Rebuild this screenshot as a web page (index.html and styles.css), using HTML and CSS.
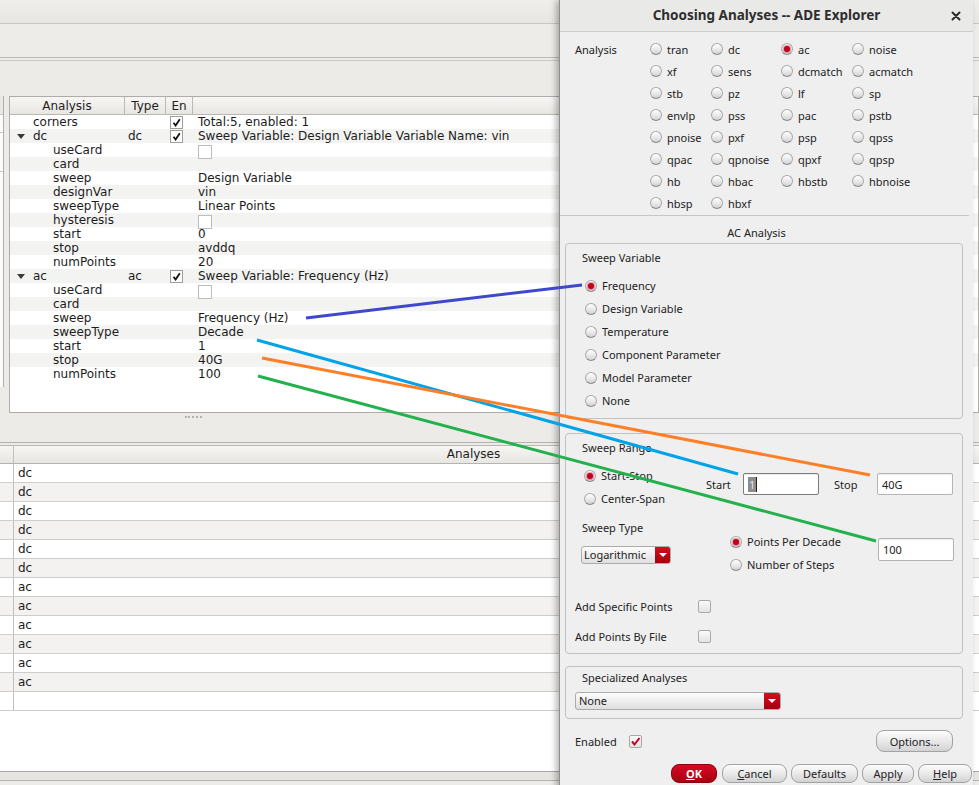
FILE: index.html
```html
<!DOCTYPE html>
<html>
<head>
<meta charset="utf-8">
<title>Choosing Analyses</title>
<link rel="stylesheet" href="styles.css">
</head>
<body>
<div class="desktop">
  <div class="app">
    <div class="tb1"></div>
    <div class="tb2"></div>
    <div class="tb3"></div>
    <div class="work">
      <div class="side">
        <div class="side-cell h1"></div>
        <div class="side-cell h2"></div>
        <div class="side-cell h3"></div>
      </div>
      <div class="tree">
        <div class="tree-head">
          <div class="hc hc1">Analysis</div>
          <div class="hc hc2">Type</div>
          <div class="hc hc3">En</div>
          <div class="hc4"></div>
        </div>
        <div class="trow"><div class="c1 top">corners</div><div class="c2"></div><div class="c3"><span class="tchk"><svg width="9" height="9" viewBox="0 0 9 9"><path d="M1.5 4.8 L3.6 7.5 L7.8 1.2" fill="none" stroke="#111" stroke-width="1.8"/></svg></span></div><div class="c4">Total:5, enabled: 1</div></div>
        <div class="trow alt"><div class="c1 top"><span class="tri"></span>dc</div><div class="c2">dc</div><div class="c3"><span class="tchk"><svg width="9" height="9" viewBox="0 0 9 9"><path d="M1.5 4.8 L3.6 7.5 L7.8 1.2" fill="none" stroke="#111" stroke-width="1.8"/></svg></span></div><div class="c4">Sweep Variable: Design Variable Variable Name: vin</div></div>
        <div class="trow"><div class="c1 sub">useCard</div><div class="c2"></div><div class="c3"></div><div class="c4"><span class="tbox"></span></div></div>
        <div class="trow alt"><div class="c1 sub">card</div><div class="c2"></div><div class="c3"></div><div class="c4"></div></div>
        <div class="trow"><div class="c1 sub">sweep</div><div class="c2"></div><div class="c3"></div><div class="c4">Design Variable</div></div>
        <div class="trow alt"><div class="c1 sub">designVar</div><div class="c2"></div><div class="c3"></div><div class="c4">vin</div></div>
        <div class="trow"><div class="c1 sub">sweepType</div><div class="c2"></div><div class="c3"></div><div class="c4">Linear Points</div></div>
        <div class="trow alt"><div class="c1 sub">hysteresis</div><div class="c2"></div><div class="c3"></div><div class="c4"><span class="tbox"></span></div></div>
        <div class="trow"><div class="c1 sub">start</div><div class="c2"></div><div class="c3"></div><div class="c4">0</div></div>
        <div class="trow alt"><div class="c1 sub">stop</div><div class="c2"></div><div class="c3"></div><div class="c4">avddq</div></div>
        <div class="trow"><div class="c1 sub">numPoints</div><div class="c2"></div><div class="c3"></div><div class="c4">20</div></div>
        <div class="trow alt"><div class="c1 top"><span class="tri"></span>ac</div><div class="c2">ac</div><div class="c3"><span class="tchk"><svg width="9" height="9" viewBox="0 0 9 9"><path d="M1.5 4.8 L3.6 7.5 L7.8 1.2" fill="none" stroke="#111" stroke-width="1.8"/></svg></span></div><div class="c4">Sweep Variable: Frequency (Hz)</div></div>
        <div class="trow"><div class="c1 sub">useCard</div><div class="c2"></div><div class="c3"></div><div class="c4"><span class="tbox"></span></div></div>
        <div class="trow alt"><div class="c1 sub">card</div><div class="c2"></div><div class="c3"></div><div class="c4"></div></div>
        <div class="trow"><div class="c1 sub">sweep</div><div class="c2"></div><div class="c3"></div><div class="c4">Frequency (Hz)</div></div>
        <div class="trow alt"><div class="c1 sub">sweepType</div><div class="c2"></div><div class="c3"></div><div class="c4">Decade</div></div>
        <div class="trow"><div class="c1 sub">start</div><div class="c2"></div><div class="c3"></div><div class="c4">1</div></div>
        <div class="trow alt"><div class="c1 sub">stop</div><div class="c2"></div><div class="c3"></div><div class="c4">40G</div></div>
        <div class="trow"><div class="c1 sub">numPoints</div><div class="c2"></div><div class="c3"></div><div class="c4">100</div></div>
      </div>
    </div>
    <div class="splitter"><span class="grip"></span></div>
    <div class="results">
      <div class="rhead"><div class="r0"></div><div class="r1 rh">Analyses</div></div>
      <div class="rrow"><div class="r0"></div><div class="r1">dc</div></div>
      <div class="rrow alt"><div class="r0"></div><div class="r1">dc</div></div>
      <div class="rrow"><div class="r0"></div><div class="r1">dc</div></div>
      <div class="rrow alt"><div class="r0"></div><div class="r1">dc</div></div>
      <div class="rrow"><div class="r0"></div><div class="r1">dc</div></div>
      <div class="rrow alt"><div class="r0"></div><div class="r1">dc</div></div>
      <div class="rrow"><div class="r0"></div><div class="r1">ac</div></div>
      <div class="rrow alt"><div class="r0"></div><div class="r1">ac</div></div>
      <div class="rrow"><div class="r0"></div><div class="r1">ac</div></div>
      <div class="rrow alt"><div class="r0"></div><div class="r1">ac</div></div>
      <div class="rrow"><div class="r0"></div><div class="r1">ac</div></div>
      <div class="rrow alt"><div class="r0"></div><div class="r1">ac</div></div>
      <div class="rrow"><div class="r0"></div><div class="r1"></div></div>
    </div>
    <div class="status"></div>
  </div>

  <div class="dialog">
    <div class="titlebar">
      <div></div>
      <div class="title">Choosing Analyses -- ADE Explorer</div>
      <div class="close"><svg width="10" height="10" viewBox="0 0 10 10"><path d="M1.5 1.5 L8.5 8.5 M8.5 1.5 L1.5 8.5" stroke="#2a2a2a" stroke-width="2" stroke-linecap="round"/></svg></div>
    </div>
    <div class="dbody">
      <div class="agrid">
        <div class="alabel">Analysis</div>
        <div class="opt"><span class="rb"></span>tran</div>
        <div class="opt"><span class="rb"></span>dc</div>
        <div class="opt"><span class="rb on"></span>ac</div>
        <div class="opt"><span class="rb"></span>noise</div>
        <div class="opt"><span class="rb"></span>xf</div>
        <div class="opt"><span class="rb"></span>sens</div>
        <div class="opt"><span class="rb"></span>dcmatch</div>
        <div class="opt"><span class="rb"></span>acmatch</div>
        <div class="opt"><span class="rb"></span>stb</div>
        <div class="opt"><span class="rb"></span>pz</div>
        <div class="opt"><span class="rb"></span>lf</div>
        <div class="opt"><span class="rb"></span>sp</div>
        <div class="opt"><span class="rb"></span>envlp</div>
        <div class="opt"><span class="rb"></span>pss</div>
        <div class="opt"><span class="rb"></span>pac</div>
        <div class="opt"><span class="rb"></span>pstb</div>
        <div class="opt"><span class="rb"></span>pnoise</div>
        <div class="opt"><span class="rb"></span>pxf</div>
        <div class="opt"><span class="rb"></span>psp</div>
        <div class="opt"><span class="rb"></span>qpss</div>
        <div class="opt"><span class="rb"></span>qpac</div>
        <div class="opt"><span class="rb"></span>qpnoise</div>
        <div class="opt"><span class="rb"></span>qpxf</div>
        <div class="opt"><span class="rb"></span>qpsp</div>
        <div class="opt"><span class="rb"></span>hb</div>
        <div class="opt"><span class="rb"></span>hbac</div>
        <div class="opt"><span class="rb"></span>hbstb</div>
        <div class="opt"><span class="rb"></span>hbnoise</div>
        <div class="opt"><span class="rb"></span>hbsp</div>
        <div class="opt"><span class="rb"></span>hbxf</div>
      </div>
      <div class="sep"></div>
      <div class="section-title">AC Analysis</div>

      <div class="group g-var">
        <div class="gtitle">Sweep Variable</div>
        <div class="vlist">
          <div class="vopt"><span class="rb on"></span>Frequency</div>
          <div class="vopt"><span class="rb"></span>Design Variable</div>
          <div class="vopt"><span class="rb"></span>Temperature</div>
          <div class="vopt"><span class="rb"></span>Component Parameter</div>
          <div class="vopt"><span class="rb"></span>Model Parameter</div>
          <div class="vopt"><span class="rb"></span>None</div>
        </div>
      </div>

      <div class="group g-range">
        <div class="gtitle">Sweep Range</div>
        <div class="range-row">
          <div class="range-radios">
            <div class="vopt"><span class="rb on"></span>Start-Stop</div>
            <div class="vopt"><span class="rb"></span>Center-Span</div>
          </div>
          <div class="fields">
            <span class="flabel fl-start">Start</span>
            <span class="tin focus"><span class="sel">1</span><span class="caret"></span></span>
            <span class="flabel fl-stop">Stop</span>
            <span class="tin">40G</span>
          </div>
        </div>
        <div class="type-row">
          <div class="type-left">
            <div class="tlabel">Sweep Type</div>
            <div class="combo c-log"><span class="ctext">Logarithmic</span><span class="cbtn"><span class="ctri"></span></span></div>
          </div>
          <div class="type-mid">
            <div class="vopt"><span class="rb on"></span>Points Per Decade</div>
            <div class="vopt"><span class="rb"></span>Number of Steps</div>
          </div>
          <div class="type-right">
            <span class="tin">100</span>
          </div>
        </div>
        <div class="chk-row first"><span class="clabel">Add Specific Points</span><span class="cbox"></span></div>
        <div class="chk-row"><span class="clabel">Add Points By File</span><span class="cbox"></span></div>
      </div>

      <div class="group g-spec">
        <div class="gtitle">Specialized Analyses</div>
        <div class="combo c-none"><span class="ctext">None</span><span class="cbtn"><span class="ctri"></span></span></div>
      </div>

      <div class="en-row">
        <span class="en-label">Enabled</span>
        <span class="cbox checked"><svg width="11" height="11" viewBox="0 0 11 11"><path d="M2 5.5 L4.5 8.5 L9.5 2" fill="none" stroke="#c4001c" stroke-width="2"/></svg></span>
        <span class="spacer"></span>
        <span class="btn opt-btn">Options...</span>
      </div>

      <div class="btn-row">
        <span class="btn ok"><u>O</u>K</span>
        <span class="btn b-cancel"><u>C</u>ancel</span>
        <span class="btn b-def">Defaults</span>
        <span class="btn b-apply">Apply</span>
        <span class="btn b-help"><u>H</u>elp</span>
      </div>
    </div>
  </div>

  <svg class="annot" width="979" height="785" viewBox="0 0 979 785">
    <line x1="306" y1="318" x2="582" y2="285" stroke="#3f48cc" stroke-width="3"/>
    <line x1="257" y1="340" x2="738" y2="474" stroke="#00a2e8" stroke-width="3"/>
    <line x1="262" y1="358" x2="870" y2="475" stroke="#ff7f27" stroke-width="3"/>
    <line x1="258" y1="376" x2="876" y2="541" stroke="#22b14c" stroke-width="3"/>
  </svg>
</div>
</body>
</html>
```
FILE: styles.css
```css
* { box-sizing: border-box; }
html, body { margin: 0; padding: 0; }
body {
  width: 979px;
  height: 785px;
  overflow: hidden;
  background: #edebe8;
  font-family: "DejaVu Sans", sans-serif;
  font-size: 12px;
  color: #1c1c1c;
}
.desktop { position: relative; width: 979px; height: 785px; overflow: hidden; }

/* ---------- background application ---------- */
.app { display: flex; flex-direction: column; width: 979px; height: 785px; background: #edebe8; }
.tb1 { height: 24px; background: linear-gradient(#efeeeb, #e8e6e2); border-bottom: 1px solid #c9c7c3; }
.tb2 { height: 34px; background: #eeece9; border-bottom: 1px solid #bdbbb7; }
.tb3 { height: 36px; margin-top: 2px; border-top: 1px solid #cac8c4; background: #edebe8; }

.work { display: flex; height: 317px; }
.side { width: 4px; height: 291px; background: #fbfbfa; border-right: 1px solid #b2b0ac; display: flex; flex-direction: column; }
.side-cell { border-bottom: 1px solid #c9c7c3; }
.side-cell.h1 { height: 19px; background: #e9e7e3; }
.side-cell.h2 { height: 18px; }
.side-cell.h3 { height: 39px; }

.tree { margin-left: 5px; flex: 1; border: 1px solid #aeaca8; background: #fff; overflow: hidden; }
.tree-head { display: grid; grid-template-columns: 115px 41px 27px 1fr; height: 18px; border-bottom: 1px solid #b9b7b3; background: linear-gradient(#f7f6f4, #e8e6e2); }
.hc { border-right: 1px solid #bcbab6; text-align: center; line-height: 18px; color: #222; }
.trow { display: grid; grid-template-columns: 115px 41px 27px 1fr; height: 14px; line-height: 14px; white-space: nowrap; }
.trow.alt { background: #f3f3f2; }
.c1 { position: relative; }
.c1.top { padding-left: 23px; }
.c1.sub { padding-left: 43px; }
.c2 { padding-left: 3px; }
.c3 { padding-left: 4px; display: flex; align-items: center; }
.c4 { padding-left: 5px; display: flex; align-items: center; }
.tri { position: absolute; left: 7px; top: 5px; width: 0; height: 0; border-left: 4px solid transparent; border-right: 4px solid transparent; border-top: 5px solid #3a3a3a; }
.tchk { width: 13px; height: 13px; border: 1px solid #9e9e9e; background: #fff; display: flex; align-items: center; justify-content: center; }
.tbox { width: 14px; height: 14px; border: 1px solid #bdbdbd; background: #fff; margin-top: 2px; }

.splitter { height: 30px; border-bottom: 1px solid #b5b3af; display: flex; justify-content: flex-start; }
.grip { margin: 3px 0 0 185px; width: 17px; height: 2px; border-top: 2px dotted #b3b1ad; }

.results { margin-top: 2px; border-top: 1px solid #bab8b4; height: 326px; background: #fff; }
.rhead { display: flex; height: 18px; border-bottom: 1px solid #b5b3af; background: linear-gradient(#f6f5f3, #e8e6e2); }
.rrow { display: flex; height: 19px; border-bottom: 1px solid #cfcdca; line-height: 18px; }
.rrow.alt { background: #f3f2f0; }
.r0 { width: 14px; border-right: 1px solid #c2c0bc; }
.r1 { flex: 1; padding-left: 4px; }
.r1.rh { text-align: center; padding-right: 50px; line-height: 17px; }
.status { height: 10px; border-top: 1px solid #aaa8a4; border-bottom: 1px solid #b8b6b2; background: #e6e4e0; }

/* ---------- dialog ---------- */
.dialog {
  position: absolute;
  left: 559px;
  top: 0;
  width: 414px;
  height: 800px;
  background: #efefef;
  border-left: 1px solid #8e8e8e;
  box-shadow: -3px 0 6px rgba(0, 0, 0, 0.28);
  font-family: "Noto Sans", "Open Sans", sans-serif;
  font-size: 11px;
  color: #222;
}
.titlebar { display: grid; grid-template-columns: 1fr auto 1fr; align-items: center; height: 32px; border-bottom: 1px solid #cdcdcd; background: #e9e9e8; }
.title { font-size: 13.5px; font-weight: 700; color: #2e2e2e; margin-top: -1px; }
.close { justify-self: end; margin-right: 12px; display: flex; }
.dbody { display: flex; flex-direction: column; padding-top: 6px; }

.agrid { margin-left: 15px; display: grid; grid-template-columns: 75px 61px 70px 71px 80px; grid-auto-rows: 22px; }
.alabel { grid-row: 1 / span 8; line-height: 22px; padding-top: 1px; }
.opt { display: flex; align-items: center; gap: 5px; white-space: nowrap; }

.rb {
  position: relative;
  flex: none;
  width: 12px;
  height: 12px;
  border-radius: 50%;
  border: 1px solid #a9a9a9;
  border-bottom-color: #8a8a8a;
  background: linear-gradient(#ffffff, #e6e6e6 60%, #d2d2d2);
}
.rb.on::after {
  content: "";
  position: absolute;
  left: 2px;
  top: 2px;
  width: 6px;
  height: 6px;
  border-radius: 50%;
  background: #c1001e;
  box-shadow: 0 0 1px 1px rgba(220, 60, 90, 0.55);
}

.sep { height: 1px; background: #c6c6c6; width: 409px; margin-top: 1px; }
.section-title { margin-top: 9px; line-height: 16px; text-align: center; padding-right: 20px; }

.group { margin-left: 5px; width: 398px; border: 1px solid #c2c2c2; border-radius: 4px; display: flex; flex-direction: column; }
.gtitle { margin-left: 16px; line-height: 16px; }
.g-var { margin-top: 2px; padding: 6px 0 6px 0; }
.vlist { margin: 8px 0 0 19px; display: flex; flex-direction: column; }
.vopt { height: 23px; display: flex; align-items: center; gap: 5px; white-space: nowrap; }

.g-range { margin-top: 14px; padding: 6px 0 7px 0; }
.range-row { margin-top: 8px; display: flex; height: 46px; }
.range-radios { margin-left: 18px; width: 122px; display: flex; flex-direction: column; }
.fields { display: flex; align-items: center; height: 22px; margin-top: 9px; }
.flabel { display: inline-block; }
.fl-start { width: 37px; }
.fl-stop { width: 43px; margin-left: 15px; }
.tin {
  display: flex;
  align-items: center;
  width: 76px;
  height: 22px;
  padding-left: 4px;
  background: #fff;
  border: 1px solid #b4b4b4;
  border-radius: 2px;
  box-shadow: inset 0 1px 1px rgba(0, 0, 0, 0.08);
}
.tin.focus { border-color: #7c7c7c; }
.sel { background: #8c8c8c; color: #e9e9e9; padding: 0 1px; line-height: 15px; }
.caret { width: 1px; height: 15px; background: #222; }

.type-row { margin-top: 10px; display: grid; grid-template-columns: 148px 148px 76px; margin-left: 16px; height: 56px; }
.tlabel { line-height: 16px; }
.combo {
  display: flex;
  height: 18px;
  border: 1px solid #ababab;
  border-radius: 3px;
  background: linear-gradient(#fdfdfd, #dfdfdf);
  overflow: hidden;
}
.c-log { margin: 10px 0 0 -1px; width: 90px; }
.ctext { flex: 1; padding-left: 2px; line-height: 16px; white-space: nowrap; }
.cbtn { width: 15px; background: linear-gradient(#d2101f, #a3000e); display: flex; align-items: center; justify-content: center; }
.ctri { width: 0; height: 0; border-left: 4px solid transparent; border-right: 4px solid transparent; border-top: 4px solid #fff; }
.type-mid { margin-top: 10px; display: flex; flex-direction: column; }
.type-right { margin-top: 18px; }
.type-right .tin { height: 23px; }

.chk-row { display: flex; align-items: center; height: 20px; margin-top: 10px; margin-left: 9px; }
.chk-row.first { margin-top: 20px; }
.clabel { width: 123px; white-space: nowrap; }
.cbox {
  width: 13px;
  height: 13px;
  border: 1px solid #a8a8a8;
  border-radius: 2px;
  background: linear-gradient(#fbfbfb, #e3e3e3);
  display: flex;
  align-items: center;
  justify-content: center;
}

.g-spec { margin-top: 12px; padding: 3px 0 8px 0; }
.c-none { margin: 6px 0 0 9px; width: 206px; }
.c-none .ctext { padding-left: 3px; }
.c-none .cbtn { width: 16px; }

.en-row { margin-top: 11px; display: flex; align-items: center; height: 22px; padding: 0 20px 0 15px; }
.en-label { width: 54px; }
.spacer { flex: 1; }
.btn {
  display: flex;
  align-items: center;
  justify-content: center;
  border: 1px solid #a3a3a3;
  border-radius: 8px;
  background: linear-gradient(#fdfdfd, #e9e9e9 50%, #d3d3d3);
  color: #222;
  white-space: nowrap;
}
.opt-btn { width: 77px; height: 22px; }
.btn-row { margin-top: 12px; display: flex; justify-content: flex-end; gap: 4px; padding-right: 1px; height: 18px; }
.btn-row .btn { height: 19px; }
.ok { width: 46px; margin-right: 1px; background: linear-gradient(#d70a24, #a8000f); border-color: #8a0010; color: #fff; font-weight: 700; }
.b-cancel { width: 65px; }
.b-def { width: 67px; }
.b-apply { width: 52px; }
.b-help { width: 54px; }

/* ---------- annotation overlay ---------- */
.annot { position: absolute; left: 0; top: 0; pointer-events: none; }
```
